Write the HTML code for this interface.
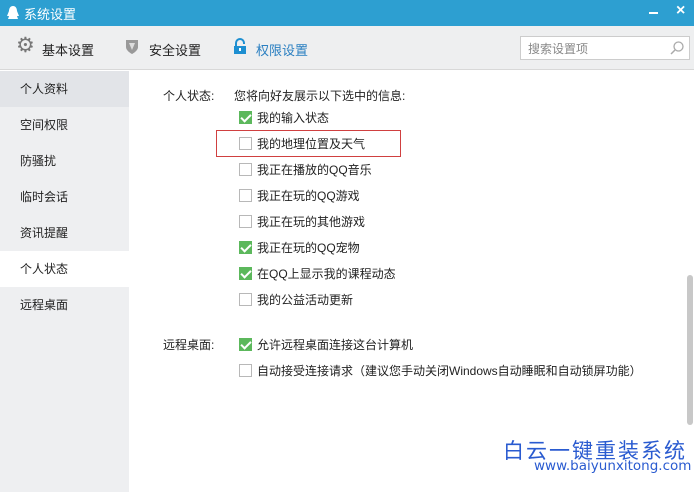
<!DOCTYPE html>
<html><head><meta charset="utf-8"><style>
*{margin:0;padding:0;box-sizing:border-box}
body{width:694px;height:492px;overflow:hidden;background:#fff;font-family:"Liberation Sans","Noto Sans CJK SC",sans-serif;font-size:12px;color:#222;position:relative}
.t{position:absolute;left:0;top:0;width:694px;height:26px;background:#2d9fd1;color:#fff;font-size:13px}
.tb{position:absolute;left:0;top:26px;width:694px;height:44px;background:#eeeff0;border-bottom:1px solid #d8d8d8}
.side{position:absolute;left:0;top:71px;width:129px;height:421px;background:#eeeff1}
.si{position:absolute;left:0;width:129px;height:36px;line-height:36px;padding-left:20px;font-size:12px;color:#222}
.a{position:absolute;white-space:nowrap}
.cb{position:absolute;left:239px;width:13px;height:13px;border:1px solid #b8b8b8;background:#fff}
.cb.on{background:#5cb85c;border-color:#5cb85c}
.cb.on:after{content:"";position:absolute;left:3px;top:0px;width:4px;height:8px;border:solid #fff;border-width:0 2px 2px 0;transform:rotate(45deg)}
.lb{position:absolute;left:257px;white-space:nowrap}
</style></head><body>
<div class="t">
<svg style="position:absolute;left:6px;top:5px" width="14" height="16" viewBox="0 0 14 16"><path d="M7 1C4 1 3 4 3 6L1 11L3 11L2 14L12 14L11 11L13 11L11 6C11 4 10 1 7 1Z" fill="#fff"/></svg>
<span class="a" style="left:24px;top:4px">系统设置</span>
<div class="a" style="left:649px;top:12px;width:9px;height:2px;background:#fff"></div>
<span class="a" style="left:676px;top:2px;font-size:16px;font-weight:bold">×</span>
</div>
<div class="tb">
<span class="a" style="left:16px;top:9px;font-size:21px;color:#777;line-height:21px">⚙</span>
<span class="a" style="left:42px;top:14px;font-size:13px">基本设置</span>
<svg style="position:absolute;left:125px;top:13px" width="14" height="16" viewBox="0 0 14 16"><path d="M1 1H13V8C13 12 7 15 7 15C7 15 1 12 1 8Z" fill="#999"/><path d="M4 4H10L7 11Z" fill="#ddd"/></svg>
<span class="a" style="left:149px;top:14px;font-size:13px">安全设置</span>
<svg style="position:absolute;left:233px;top:12px" width="14" height="17" viewBox="0 0 14 17"><path d="M3 8V5A4 4 0 0 1 11 5V6" fill="none" stroke="#1d8fd1" stroke-width="2"/><rect x="1" y="8" width="12" height="8" fill="#1d8fd1"/><rect x="6" y="10" width="2" height="3" fill="#fff"/></svg>
<span class="a" style="left:256px;top:14px;font-size:13px;color:#2a7fc1">权限设置</span>
<div class="a" style="left:520px;top:10px;width:170px;height:24px;background:#fff;border:1px solid #ccc"></div>
<span class="a" style="left:528px;top:14px;color:#888">搜索设置项</span>
<svg style="position:absolute;left:669px;top:14px" width="16" height="16" viewBox="0 0 16 16"><circle cx="9.5" cy="6.5" r="4.5" fill="none" stroke="#aaa" stroke-width="1.3"/><path d="M6 10L2 14" stroke="#aaa" stroke-width="1.5"/></svg>
</div>
<div class="side">
<div class="si" style="top:0;background:#e2e4e8">个人资料</div>
<div class="si" style="top:36px">空间权限</div>
<div class="si" style="top:72px">防骚扰</div>
<div class="si" style="top:108px">临时会话</div>
<div class="si" style="top:144px">资讯提醒</div>
<div class="si" style="top:180px;background:#fff">个人状态</div>
<div class="si" style="top:216px">远程桌面</div>
</div>
<span class="a" style="left:163px;top:87px">个人状态:</span>
<span class="a" style="left:234px;top:87px">您将向好友展示以下选中的信息:</span>
<div class="a" style="left:216px;top:130px;width:185px;height:27px;border:1px solid #d04040"></div>
<div class="cb on" style="top:111px"></div><span class="lb" style="top:109px">我的输入状态</span>
<div class="cb" style="top:137px"></div><span class="lb" style="top:135px">我的地理位置及天气</span>
<div class="cb" style="top:163px"></div><span class="lb" style="top:161px">我正在播放的QQ音乐</span>
<div class="cb" style="top:189px"></div><span class="lb" style="top:187px">我正在玩的QQ游戏</span>
<div class="cb" style="top:215px"></div><span class="lb" style="top:213px">我正在玩的其他游戏</span>
<div class="cb on" style="top:241px"></div><span class="lb" style="top:239px">我正在玩的QQ宠物</span>
<div class="cb on" style="top:267px"></div><span class="lb" style="top:265px">在QQ上显示我的课程动态</span>
<div class="cb" style="top:293px"></div><span class="lb" style="top:291px">我的公益活动更新</span>
<span class="a" style="left:163px;top:336px">远程桌面:</span>
<div class="cb on" style="top:338px"></div><span class="lb" style="top:336px">允许远程桌面连接这台计算机</span>
<div class="cb" style="top:364px"></div><span class="lb" style="top:362px">自动接受连接请求（建议您手动关闭Windows自动睡眠和自动锁屏功能）</span>
<div class="a" style="left:687px;top:275px;width:6px;height:150px;background:#c8c8c8;border-radius:3px"></div>
<span class="a" style="left:503px;top:435px;font-size:21px;color:#2a5bd0;letter-spacing:2px">白云一键重装系统</span>
<span class="a" style="left:534px;top:458px;font-family:'DejaVu Sans',sans-serif;font-size:13.5px;color:#2a5bd0">www.baiyunxitong.com</span>
</body></html>
